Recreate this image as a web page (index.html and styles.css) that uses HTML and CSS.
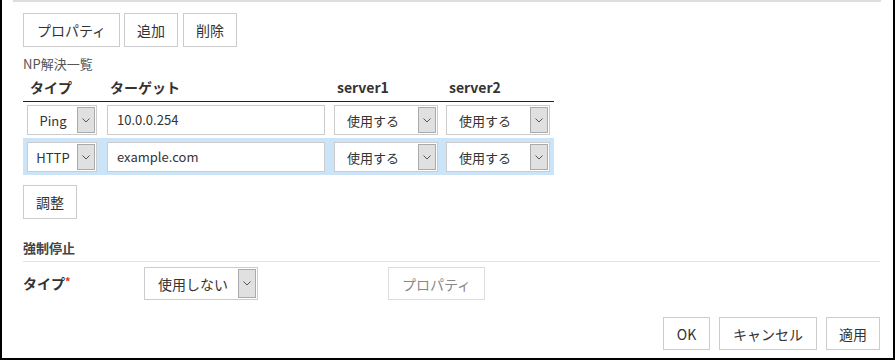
FILE: index.html
```html
<!DOCTYPE html>
<html lang="ja">
<head>
    <meta charset="UTF-8">
    <title>NP解決</title>
    <link rel="stylesheet" href="styles.css">
</head>
<body>
    <div class="frame">
        <div class="top-line"></div>
        <div class="content">
            <div class="toolbar">
                <button class="btn btn-prop">プロパティ</button>
                <button class="btn btn-small">追加</button>
                <button class="btn btn-small">削除</button>
            </div>
            <div class="caption">NP解決一覧</div>
            <table class="np-table">
                <thead>
                    <tr>
                        <th class="col-type">タイプ</th>
                        <th class="col-target">ターゲット</th>
                        <th class="col-server">server1</th>
                        <th class="col-server">server2</th>
                    </tr>
                </thead>
                <tbody>
                    <tr>
                        <td><div class="sel sel-type"><span class="sel-val">Ping</span><span class="sel-arrow"><svg width="8" height="5" viewBox="0 0 8 5"><polyline points="0.5,0.5 4,4 7.5,0.5" fill="none" stroke="#555" stroke-width="1"/></svg></span></div></td>
                        <td><div class="txt">10.0.0.254</div></td>
                        <td><div class="sel sel-server"><span class="sel-val">使用する</span><span class="sel-arrow"><svg width="8" height="5" viewBox="0 0 8 5"><polyline points="0.5,0.5 4,4 7.5,0.5" fill="none" stroke="#555" stroke-width="1"/></svg></span></div></td>
                        <td><div class="sel sel-server"><span class="sel-val">使用する</span><span class="sel-arrow"><svg width="8" height="5" viewBox="0 0 8 5"><polyline points="0.5,0.5 4,4 7.5,0.5" fill="none" stroke="#555" stroke-width="1"/></svg></span></div></td>
                    </tr>
                    <tr class="selected">
                        <td><div class="sel sel-type"><span class="sel-val">HTTP</span><span class="sel-arrow"><svg width="8" height="5" viewBox="0 0 8 5"><polyline points="0.5,0.5 4,4 7.5,0.5" fill="none" stroke="#555" stroke-width="1"/></svg></span></div></td>
                        <td><div class="txt">example.com</div></td>
                        <td><div class="sel sel-server"><span class="sel-val">使用する</span><span class="sel-arrow"><svg width="8" height="5" viewBox="0 0 8 5"><polyline points="0.5,0.5 4,4 7.5,0.5" fill="none" stroke="#555" stroke-width="1"/></svg></span></div></td>
                        <td><div class="sel sel-server"><span class="sel-val">使用する</span><span class="sel-arrow"><svg width="8" height="5" viewBox="0 0 8 5"><polyline points="0.5,0.5 4,4 7.5,0.5" fill="none" stroke="#555" stroke-width="1"/></svg></span></div></td>
                    </tr>
                </tbody>
            </table>
            <button class="btn btn-small btn-adjust">調整</button>
            <div class="section-title">強制停止</div>
            <div class="form-row">
                <div class="label">タイプ<span class="req">*</span></div>
                <div class="sel sel-force"><span class="sel-val">使用しない</span><span class="sel-arrow"><svg width="8" height="5" viewBox="0 0 8 5"><polyline points="0.5,0.5 4,4 7.5,0.5" fill="none" stroke="#555" stroke-width="1"/></svg></span></div>
                <button class="btn btn-prop btn-disabled">プロパティ</button>
            </div>
            <div class="footer">
                <button class="btn btn-ok">OK</button>
                <button class="btn btn-cancel">キャンセル</button>
                <button class="btn btn-apply">適用</button>
            </div>
        </div>
    </div>
</body>
</html>
```

FILE: styles.css
```css
body {
    margin: 0;
    font-family: "Noto Sans CJK JP", "Noto Sans", sans-serif;
    font-size: 14px;
    color: #333;
    background: #fff;
}
.frame {
    width: 895px;
    height: 360px;
    box-sizing: border-box;
    border-left: 2px solid #000;
    border-right: 2px solid #000;
    border-bottom: 2px solid #000;
    overflow: hidden;
}
.top-line {
    margin: 0 12px 0 11px;
    border-top: 2px solid #ddd;
}
.content {
    padding: 11px 13px 0 21px;
}
.toolbar {
    display: flex;
    gap: 4px;
}
.btn {
    height: 34px;
    box-sizing: border-box;
    border: 1px solid #ccc;
    background: #fff;
    color: #333;
    font-family: inherit;
    font-size: 14px;
    padding: 0;
    margin: 0;
    cursor: pointer;
}
.btn-prop {
    width: 97px;
}
.btn-small {
    width: 54px;
}
.toolbar .btn-small:last-child {
    margin-left: 1px;
}
.caption {
    margin-top: 8px;
    font-size: 13px;
    color: #555;
    line-height: 18px;
}
.np-table {
    border-collapse: collapse;
    margin-top: 2px;
}
.np-table th {
    text-align: left;
    font-weight: bold;
    font-size: 14px;
    padding: 0 4px 3px 7px;
    height: 23px;
    border-bottom: 1px solid #222;
}
.np-table th.col-type { width: 69px; }
.np-table th.col-target { width: 216px; }
.np-table th.col-server { width: 101px; }
.np-table td {
    padding: 3px 4px;
}
.np-table tr.selected td {
    background: #cce4f7;
    padding-top: 4px;
    padding-bottom: 3px;
}
.sel {
    display: flex;
    height: 30px;
    box-sizing: border-box;
    border: 1px solid #ccc;
    background: #fff;
    font-size: 13px;
}
.sel-val {
    flex: 1;
    display: flex;
    align-items: center;
    justify-content: center;
}
.sel-arrow {
    width: 16px;
    margin: 1px;
    background: #e0e0e0;
    border: 1px solid #aaa;
    display: flex;
    align-items: center;
    justify-content: center;
}
.sel-type { width: 70px; }
.sel-type .sel-val { padding-left: 2px; }
.sel-server { width: 104px; }
.sel-server .sel-val { padding-right: 6px; }
.txt {
    width: 218px;
    height: 30px;
    box-sizing: border-box;
    border: 1px solid #ccc;
    background: #fff;
    font-size: 13px;
    line-height: 28px;
    padding-left: 9px;
}
.btn-adjust {
    display: block;
    margin-top: 10px;
}
.section-title {
    margin-top: 20px;
    font-weight: bold;
    font-size: 13px;
    color: #444;
    line-height: 18px;
    padding-bottom: 4px;
    border-bottom: 1px solid #e3e3e3;
}
.form-row {
    display: flex;
    align-items: flex-start;
    margin-top: 5px;
}
.label {
    width: 121px;
    font-weight: bold;
    font-size: 14px;
    padding-top: 6px;
}
.req {
    color: #e0301e;
    font-size: 11px;
    vertical-align: top;
}
.sel-force {
    width: 114px;
    height: 33px;
    font-size: 14px;
}
.sel-force .sel-val { padding-left: 4px; }
.btn-disabled {
    height: 33px;
    margin-left: 130px;
    color: #888;
    border-color: #ddd;
    cursor: default;
}
.footer {
    display: flex;
    justify-content: flex-end;
    margin-top: 17px;
}
.footer .btn { height: 33px; }
.btn-ok { width: 47px; }
.btn-cancel { width: 98px; margin-left: 9px; }
.btn-apply { width: 54px; margin-left: 9px; }
```
